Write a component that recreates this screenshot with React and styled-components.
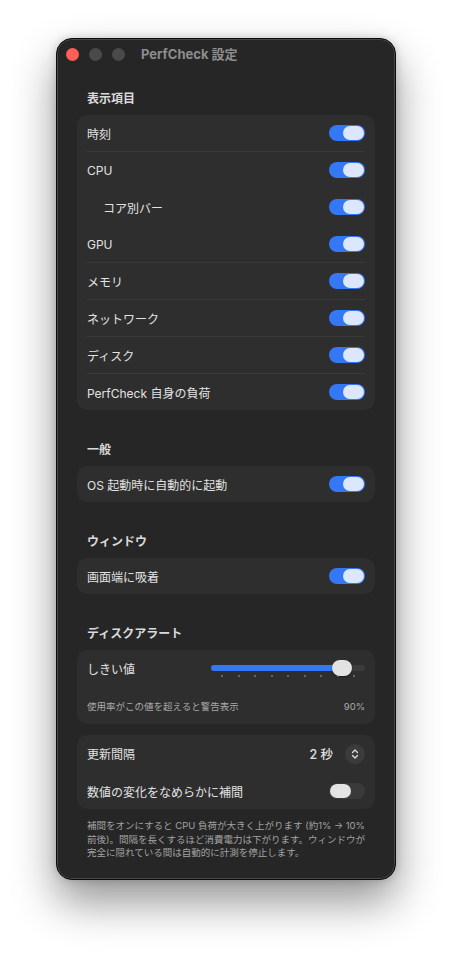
import styled, { createGlobalStyle } from "styled-components";

const GlobalStyle = createGlobalStyle`
  html, body {
    margin: 0;
    padding: 0;
    background: #ffffff;
    min-height: 100vh;
  }
  body {
    font-family: "Inter", "Noto Sans CJK JP", sans-serif;
    -webkit-font-smoothing: antialiased;
  }
  #root {
    display: flex;
    justify-content: center;
    padding: 38px 0 70px;
  }
`;

const Window = styled.div`
  width: 340px;
  box-sizing: border-box;
  background: #262626;
  border-radius: 16px;
  border: 1px solid #0c0c0c;
  box-shadow: inset 0 0 0 1px rgba(255, 255, 255, 0.16),
    0 22px 44px rgba(0, 0, 0, 0.42), 0 0 10px rgba(0, 0, 0, 0.18);
  display: flex;
  flex-direction: column;
  padding-bottom: 19px;
`;

const TitleBar = styled.div`
  height: 30px;
  display: flex;
  align-items: center;
  padding: 0 9px;
  gap: 10px;
`;

const Light = styled.span`
  width: 13px;
  height: 13px;
  border-radius: 50%;
  background: ${(p) => p.$color};
  flex: none;
`;

const Title = styled.div`
  margin-left: 6px;
  font-size: 13px;
  line-height: 16px;
  font-weight: 700;
  color: #8d8d8d;
`;

const Content = styled.div`
  padding: 22px 20px 0;
  display: flex;
  flex-direction: column;
`;

const Section = styled.section`
  display: flex;
  flex-direction: column;
  margin-bottom: ${(p) => p.$gap ?? 32}px;
`;

const Header = styled.h2`
  margin: 0 0 8px 10px;
  font-size: 12px;
  line-height: 16px;
  font-weight: 700;
  color: #dadada;
`;

const Card = styled.div`
  background: #2e2e2e;
  border-radius: 10px;
  display: flex;
  flex-direction: column;
`;

const Row = styled.div`
  height: ${(p) => p.$h ?? 36}px;
  display: flex;
  align-items: center;
  justify-content: space-between;
  padding: 0 10px 0 ${(p) => (p.$indent ? 26 : 10)}px;
  position: relative;
  & + &::before {
    content: "";
    position: absolute;
    top: -1px;
    left: 10px;
    right: 10px;
    height: 1px;
    background: #3a3a3a;
  }
  & + & {
    margin-top: 1px;
  }
`;

const Label = styled.span`
  font-size: 12px;
  color: #e2e2e2;
`;

const Caption = styled.span`
  font-size: 9.5px;
  color: #a9a9a9;
`;

const Track = styled.span`
  width: 36px;
  height: 16px;
  border-radius: 8px;
  background: ${(p) => (p.$on ? "#3478f6" : "#3a3a3a")};
  display: flex;
  align-items: center;
  justify-content: ${(p) => (p.$on ? "flex-end" : "flex-start")};
  padding: 0 1px;
  box-sizing: border-box;
`;

const Knob = styled.span`
  width: 21px;
  height: 14px;
  border-radius: 7px;
  background: ${(p) => (p.$on ? "#dce7fd" : "#e4e4e4")};
`;

const Toggle = ({ on }) => (
  <Track $on={on}>
    <Knob $on={on} />
  </Track>
);

const SliderBox = styled.div`
  width: 154px;
  height: 22px;
  position: relative;
  margin-top: 4px;
`;

const SliderRail = styled.div`
  position: absolute;
  left: 0;
  right: 0;
  top: 5px;
  height: 6px;
  border-radius: 3px;
  background: #3c3c3c;
`;

const SliderFill = styled.div`
  height: 100%;
  border-radius: 3px;
  background: #3478f6;
`;

const SliderThumb = styled.div`
  position: absolute;
  top: 0;
  width: 20px;
  height: 16px;
  margin-left: -10px;
  border-radius: 8px;
  background: #e2e2e2;
  box-shadow: 0 1px 2px rgba(0, 0, 0, 0.4);
`;

const Ticks = styled.div`
  position: absolute;
  left: 10px;
  right: 10px;
  top: 15px;
  display: flex;
  justify-content: space-between;
`;

const Tick = styled.span`
  width: 2px;
  height: 2px;
  background: #7a7a7a;
  border-radius: 1px;
`;

const Slider = ({ value }) => {
  const x = 10 + (134 * value) / 100;
  return (
    <SliderBox>
      <SliderRail>
        <SliderFill style={{ width: x }} />
      </SliderRail>
      <Ticks>
        {Array.from({ length: 9 }).map((_, i) => (
          <Tick key={i} />
        ))}
      </Ticks>
      <SliderThumb style={{ left: x }} />
    </SliderBox>
  );
};

const StepperWrap = styled.div`
  display: flex;
  align-items: center;
  gap: 12px;
`;

const StepValue = styled.span`
  font-size: 12.5px;
  font-weight: 500;
  color: #e2e2e2;
`;

const StepButton = styled.span`
  width: 20px;
  height: 20px;
  border-radius: 50%;
  background: #3b3b3b;
  display: flex;
  align-items: center;
  justify-content: center;
`;

const Note = styled.p`
  margin: 10px 10px 0;
  font-size: 9.5px;
  line-height: 13.5px;
  color: #a3a3a3;
  white-space: nowrap;
`;

const displayItems = [
  { label: "時刻" },
  { label: "CPU" },
  { label: "コア別バー", indent: true },
  { label: "GPU" },
  { label: "メモリ" },
  { label: "ネットワーク" },
  { label: "ディスク" },
  { label: "PerfCheck 自身の負荷" },
];

export default function App() {
  return (
    <>
      <GlobalStyle />
      <Window>
        <TitleBar>
          <Light $color="#ff5f57" />
          <Light $color="#4a4a4a" />
          <Light $color="#4a4a4a" />
          <Title>PerfCheck 設定</Title>
        </TitleBar>
        <Content>
          <Section>
            <Header>表示項目</Header>
            <Card>
              {displayItems.map((item) => (
                <Row key={item.label} $indent={item.indent}>
                  <Label>{item.label}</Label>
                  <Toggle on />
                </Row>
              ))}
            </Card>
          </Section>

          <Section>
            <Header>一般</Header>
            <Card>
              <Row>
                <Label>OS 起動時に自動的に起動</Label>
                <Toggle on />
              </Row>
            </Card>
          </Section>

          <Section>
            <Header>ウィンドウ</Header>
            <Card>
              <Row>
                <Label>画面端に吸着</Label>
                <Toggle on />
              </Row>
            </Card>
          </Section>

          <Section $gap={11}>
            <Header>ディスクアラート</Header>
            <Card>
              <Row $h={37}>
                <Label>しきい値</Label>
                <Slider value={90} />
              </Row>
              <Row>
                <Caption>使用率がこの値を超えると警告表示</Caption>
                <Caption>90%</Caption>
              </Row>
            </Card>
          </Section>

          <Section $gap={0}>
            <Card>
              <Row $h={37}>
                <Label>更新間隔</Label>
                <StepperWrap>
                  <StepValue>2 秒</StepValue>
                  <StepButton>
                    <svg width="8" height="12" viewBox="0 0 8 12" fill="none">
                      <path
                        d="M1.5 4.5 L4 2 L6.5 4.5 M1.5 7.5 L4 10 L6.5 7.5"
                        stroke="#dddddd"
                        strokeWidth="1.3"
                        strokeLinecap="round"
                        strokeLinejoin="round"
                      />
                    </svg>
                  </StepButton>
                </StepperWrap>
              </Row>
              <Row>
                <Label>数値の変化をなめらかに補間</Label>
                <Toggle on={false} />
              </Row>
            </Card>
          </Section>

          <Note>
            補間をオンにすると CPU 負荷が大きく上がります (約1% → 10%
            <br />
            前後)。間隔を長くするほど消費電力は下がります。ウィンドウが
            <br />
            完全に隠れている間は自動的に計測を停止します。
          </Note>
        </Content>
      </Window>
    </>
  );
}
